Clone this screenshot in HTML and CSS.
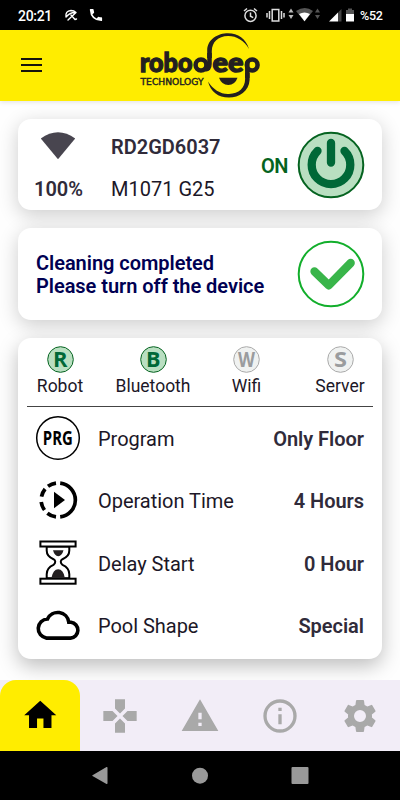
FILE: index.html
```
<!DOCTYPE html>
<html lang="en">
<head>
<meta charset="utf-8">
<title>Robodeep Technology</title>
<link rel="stylesheet" href="styles.css">
</head>
<body>
<div class="phone">
  <div class="status">
    <span class="time">20:21</span>
    <svg class="status-left" width="44" height="20" viewBox="62 5 44 20">
      <g fill="none" stroke="#fff" stroke-width="1.4" stroke-linecap="round" stroke-linejoin="round"><path d="M66 17Q65 11 71 10.500Q74 10.500 76 12.500Q70 12 66 17ZM76 12.500L68 20M71 15L75 19.500L76.500 19"/></g>
      <path d="M90.500 9.200h2.300q.7 0 .8.700.1 1.300.5 2.400.2.600-.2 1l-1.500 1.500q1.700 3 4.300 4l1.300-1.400q.4-.4 1-.2 1.100.3 2.400.4.700.1.700.8v2.300q0 .7-.8.700Q90.400 20.800 89.800 10q0-.8.700-.8z" fill="#fff" transform="translate(0 -.3)"/>
    </svg>
    <svg class="status-right" width="116" height="20" viewBox="240 5 116 20">
      <g fill="none" stroke="#ddd" stroke-width="1.5"><circle cx="250.500" cy="15.800" r="5.600"/><path d="M244 11l3-2.500M257 11l-3-2.500M250.500 12.500v3.700l2.700 1.500"/><rect x="272.200" y="9.500" width="6.600" height="11.500"/><path d="M269.500 11v8M281.500 11v8M267 13v4.500M284 13v4.500"/></g>
      <path d="M288.500 12.500l2.500-4 2.500 4zM288.500 15h5l-2.500 4z" fill="#bbb"/>
      <path d="M296 11q9-6 17 0l-8.500 10.500z" fill="#555"/><path d="M299 14q5.500-3 11 0l-5.500 7.200z" fill="#fff"/>
      <path d="M315 12.500l2.500-4 2.500 4zM315 15h5l-2.500 4z" fill="#555"/>
      <path d="M329 21.500l9-9v9z" fill="#fff"/><path d="M338 12.500l3.500-3.500v12.500H338z" fill="#444"/>
      <path d="M346 10h2V8.500h4V10h2v4h-8z" fill="#555"/><path d="M346 14h8v7.500h-8z" fill="#fff"/>
    </svg>
    <span class="battery">%52</span>
  </div>

  <header class="appbar">
    <div class="menu"><i></i><i></i><i></i></div>
    <svg class="logo" width="124" height="68" viewBox="138 32 124 68">
      <text class="brand" x="139.900" y="72" textLength="52.500" lengthAdjust="spacingAndGlyphs">robo</text>
      <text class="brand" x="212.500" y="72" textLength="31" lengthAdjust="spacingAndGlyphs">ee</text>
      <text class="sub" x="140.500" y="85.200" textLength="63" lengthAdjust="spacingAndGlyphs">TECHNOLOGY</text>
      <g fill="none" stroke="#231f20" stroke-width="4.500"><circle cx="201" cy="65" r="5.400"/><circle cx="252.200" cy="65" r="5.400"/><path d="M205 69q4.500 1 4.500-5V53M248 61q-.7 1-.7 5v12"/></g>
      <path d="M207.200 58V50C207.500 39 218 33.200 228 33.200C238 33.200 246 38.500 249 49C244.500 40.500 236 35.800 228 36C218 36.200 212 42 211.800 51V58z" fill="#231f20"/>
      <path d="M249.600 73V80C249 91 239 97.600 229 97.600C218 97.600 210.500 91.500 208 81.500C213 89.500 221 94.500 229 94C239 93.500 245 88 245.100 79V73z" fill="#231f20"/>
      <path d="M219 77.800h18.500q-2.500 7.200-9.200 7.200t-9.300-7.200z" fill="#231f20"/>
    </svg>
  </header>

  <main>
    <section class="card device">
      <svg class="signal" width="36" height="30" viewBox="0 0 36 30"><path d="M.8 7.500Q18-5 35.200 7.500L18 28.300z" fill="#48454f"/></svg>
      <b class="serial">RD2GD6037</b>
      <b class="percent">100%</b>
      <span class="model">M1071 G25</span>
      <b class="on">ON</b>
      <svg class="power" width="68" height="68" viewBox="0 0 68 68"><circle cx="34" cy="34" r="32.300" fill="#b9dfc1" stroke="#056320" stroke-width="2"/><path d="M20.500 20a19.300 19.300 0 1 0 27 0M34 12v19.500" fill="none" stroke="#006837" stroke-width="8.300" stroke-linecap="round"/></svg>
    </section>

    <section class="card message">
      <p>Cleaning completed<br>Please turn off the device</p>
      <svg width="68" height="68" viewBox="0 0 68 68"><circle cx="34" cy="34" r="32.300" fill="none" stroke="#12ae2b" stroke-width="2"/><path d="M17.500 31.500L31.700 45.300 53.700 23" fill="none" stroke="#39b54a" stroke-width="8.300" stroke-linecap="round" stroke-linejoin="round"/></svg>
    </section>

    <section class="card details">
      <div class="links">
        <div class="link active"><svg class="badge" width="27" height="27" viewBox="0 0 27 27"><circle cx="13.500" cy="13.500" r="12.800"/><text x="6" y="21.200" textLength="14.500" lengthAdjust="spacingAndGlyphs">R</text></svg><span>Robot</span></div>
        <div class="link active"><svg class="badge" width="27" height="27" viewBox="0 0 27 27"><circle cx="13.500" cy="13.500" r="12.800"/><text x="6" y="21.200" textLength="14.500" lengthAdjust="spacingAndGlyphs">B</text></svg><span>Bluetooth</span></div>
        <div class="link"><svg class="badge" width="27" height="27" viewBox="0 0 27 27"><circle cx="13.500" cy="13.500" r="12.800"/><text x="5" y="21.200" textLength="17" lengthAdjust="spacingAndGlyphs">W</text></svg><span>Wifi</span></div>
        <div class="link"><svg class="badge" width="27" height="27" viewBox="0 0 27 27"><circle cx="13.500" cy="13.500" r="12.800"/><text x="7" y="21.200" textLength="13" lengthAdjust="spacingAndGlyphs">S</text></svg><span>Server</span></div>
      </div>
      <div class="row">
        <svg width="46" height="46" viewBox="0 0 46 46"><circle cx="23" cy="23" r="21.300" fill="none" stroke="#000" stroke-width="1.500"/><text class="prg" x="7.800" y="30" textLength="30" lengthAdjust="spacingAndGlyphs">PRG</text></svg>
        <span>Program</span><b>Only Floor</b>
      </div>
      <div class="row">
        <svg width="46" height="46" viewBox="0 0 46 46"><g fill="none" stroke="#000" stroke-width="3.700"><path d="M25.200 6.100a17 17 0 0 1 0 33.800"/><path d="M21 6.100A17 17 0 0 0 13 9.300M10.100 12A17 17 0 0 0 6.500 19.700M6.200 25a17 17 0 0 0 3.300 8M12.400 36.200a17 17 0 0 0 8.600 3.700"/></g><path d="M19 14.700v16.600L30 23z"/></svg>
        <span>Operation Time</span><b>4 Hours</b>
      </div>
      <div class="row">
        <svg width="46" height="46" viewBox="0 0 46 46"><g fill="#fff" stroke="#000" stroke-width="2"><path d="M11.700 6.500v4q0 6 6.800 8.700 3.500 2 0 5.700-6.800 3-6.800 9.300v4h22.600v-4q0-6.300-6.800-9.300-3.500-3.700 0-5.700 6.800-2.700 6.800-8.700v-4z"/><rect x="5.400" y="1.500" width="35.200" height="5"/><rect x="5.400" y="38.700" width="35.200" height="5"/></g><path d="M18 10.300h10.500q-1.500 5.700-5.250 6-3.750-.3-5.250-6zM16.500 37.800q1.500-8.300 6.700-8.500 5.200.2 6.600 8.500z" fill="#231f20"/></svg>
        <span>Delay Start</span><b>0 Hour</b>
      </div>
      <div class="row">
        <svg width="46" height="46" viewBox="0 0 46 46"><path d="M11.500 36.100h24a8 8 0 0 0 .5-15.900h-2.200A11.200 11.200 0 0 0 12.500 17A9.600 9.600 0 0 0 11.500 36.100z" fill="none" stroke="#000" stroke-width="3.600"/></svg>
        <span>Pool Shape</span><b>Special</b>
      </div>
    </section>
  </main>

  <nav class="tabs">
    <div class="tab current"><svg width="38.500" height="38.500" viewBox="0 0 24 24"><path d="M10 20v-6h4v6h5v-8h3L12 3 2 12h3v8z"/></svg></div>
    <div class="tab"><svg width="40" height="40" viewBox="0 0 24 24"><path d="M15 7.500V2H9v5.500l3 3zM7.500 9H2v6h5.500l3-3zM9 16.500V22h6v-5.500l-3-3zM16.500 9l-3 3 3 3H22V9z"/></svg></div>
    <div class="tab"><svg width="40" height="40" viewBox="0 0 24 24"><path d="M1 21h22L12 2zm12-3h-2v-2h2zm0-4h-2v-4h2z"/></svg></div>
    <div class="tab"><svg width="40" height="40" viewBox="0 0 24 24"><path d="M11 7h2v2h-2zm0 4h2v6h-2zm1-9a10 10 0 1 0 0 20 10 10 0 0 0 0-20zm0 18a8 8 0 1 1 0-16 8 8 0 0 1 0 16z"/></svg></div>
    <div class="tab"><svg width="40" height="40" viewBox="0 0 24 24"><path d="M19.140 12.940c.04-.3.060-.61.060-.94s-.02-.64-.07-.94l2.030-1.580a.49.490 0 0 0 .12-.61l-1.920-3.320a.488.488 0 0 0-.59-.22l-2.390.96c-.5-.38-1.030-.7-1.620-.94l-.36-2.540a.484.484 0 0 0-.48-.41h-3.840c-.24 0-.43.170-.47.410l-.36 2.540c-.59.240-1.130.57-1.620.94l-2.390-.96c-.22-.08-.47 0-.59.220L2.740 8.870c-.12.210-.08.470.12.610l2.030 1.580c-.05.300-.09.630-.09.940s.02.640.07.940l-2.030 1.580a.49.490 0 0 0-.12.610l1.920 3.320c.12.220.37.290.59.220l2.390-.96c.5.380 1.030.700 1.620.940l.36 2.540c.05.240.24.410.48.410h3.840c.24 0 .44-.17.470-.41l.36-2.540c.59-.24 1.130-.56 1.620-.94l2.390.96c.22.080.47 0 .59-.22l1.920-3.320c.12-.22.070-.47-.12-.61zM12 15.600A3.600 3.600 0 1 1 12 8.400a3.600 3.600 0 0 1 0 7.200z"/></svg></div>
  </nav>

  <div class="system">
    <svg width="18" height="20" viewBox="0 0 18 20"><path d="M1.500 9.300L15.500 1q1-.3 1 .7v15.500q0 1-1 .7L1.500 10q-.6-.3 0-.7z"/></svg>
    <svg width="18" height="20" viewBox="0 0 18 20"><circle cx="9" cy="9.700" r="8"/></svg>
    <svg width="18" height="20" viewBox="0 0 18 20"><rect x=".5" y="1" width="17" height="17" rx="1"/></svg>
  </div>
</div>
</body>
</html>
```
FILE: styles.css
```
* { box-sizing: border-box; }
body { margin: 0; font-family: Roboto, "Liberation Sans", sans-serif; color: #1c1727; }
svg { display: block; flex: none; overflow: visible; }
.phone { width: 400px; height: 800px; display: flex; flex-direction: column; overflow: hidden; background: #fefefe; }

.status { height: 30px; flex: none; display: flex; align-items: center; padding: 1px 0 0 18px; background: #000; color: #fff; font-weight: 500; }
.time { width: 44px; font-size: 14px; line-height: 20px; letter-spacing: -.3px; white-space: nowrap; }
.status-left, .status-right { margin-top: -1px; }
.status-right { margin-left: 134px; }
.battery { margin-left: 4px; font-size: 12.500px; letter-spacing: -.3px; }

.appbar { height: 71px; flex: none; display: flex; padding: 2px 0 0 21px; background: #ffed00; box-shadow: 0 1px 5px rgba(0,0,0,.12); }
.menu { width: 21px; height: 14px; margin: 26px 96px 0 0; display: flex; flex-direction: column; justify-content: space-between; }
.menu i { height: 2px; background: #17130b; }
.brand { font: 900 27px Lato, sans-serif; fill: #231f20; stroke: #231f20; stroke-width: 1.300px; }
.sub { font: 400 8.500px "DejaVu Sans", sans-serif; fill: #231f20; stroke: #231f20; stroke-width: .4px; }

main { height: 579px; flex: none; padding: 18px 18px 0; display: flex; flex-direction: column; gap: 18px; overflow: hidden; }
.card { flex: none; background: #fff; border-radius: 13px; box-shadow: 0 5px 20px rgba(0,0,0,.2); }
.device { height: 91px; display: grid; grid-template-columns: 93px 148px 38px 68px; grid-template-rows: 42px 42px; padding-top: 7px; align-items: center; font-size: 20px; }
.signal { justify-self: center; margin: 0 13px 2px 0; }
b { font-weight: 600; color: #302b3a; }
.serial { grid-column: 2; grid-row: 1; margin-top: -1px; }
.percent { padding-left: 16px; grid-column: 1; grid-row: 2; }
.model { grid-column: 2; grid-row: 2; }
.on { color: #056320; grid-column: 3; grid-row: 1 / 3; font-size: 20px; letter-spacing: -.5px; padding-left: 2px; margin-top: -5px; }
.power { grid-column: 4; grid-row: 1 / 3; margin-top: -6px; }

.message { height: 91.500px; display: flex; align-items: center; justify-content: space-between; padding: 0 17px 0 18px; }
.message p { margin: 2px 0 0; font-size: 20px; line-height: 23px; letter-spacing: -.04px; font-weight: 600; color: #000052; }

.details { height: 321.500px; box-shadow: 0 7px 20px rgba(0,0,0,.26); }
.links { height: 69.500px; margin: 0 9px; padding: 8.500px 0 0; border-bottom: 1px solid #444; display: grid; grid-template-columns: 66px 120px 67px 120px; }
.link { display: flex; flex-direction: column; align-items: center; font-size: 17.500px; line-height: 26px; }
.badge { font: 700 21.500px "Open Sans", sans-serif; fill: #9a9c9e; }
.badge circle { fill: #f0f2f1; stroke: #aaa; }
.active .badge { fill: #006837; }
.active .badge circle { fill: #b9dfc1; stroke: #056320; }
.row { height: 62.300px; display: flex; align-items: center; padding: 0 18px 0 17px; font-size: 20px; }
.row span { margin: 2px 0 0 17px; letter-spacing: -.03px; }
.row b { margin: 2px 0 0 auto; letter-spacing: -.03px; }
.prg { font: 700 20px "Open Sans", sans-serif; }

.tabs { height: 71px; flex: none; display: flex; background: #f2edf7; }
.tab { width: 80px; display: flex; align-items: center; justify-content: center; fill: #a9a9a9; }
.current { background: #ffed00; border-radius: 16px 16px 0 0; fill: #000; }
.system { height: 49px; flex: none; background: #000; display: flex; justify-content: center; gap: 82px; padding-top: 15px; fill: #999; }
```
